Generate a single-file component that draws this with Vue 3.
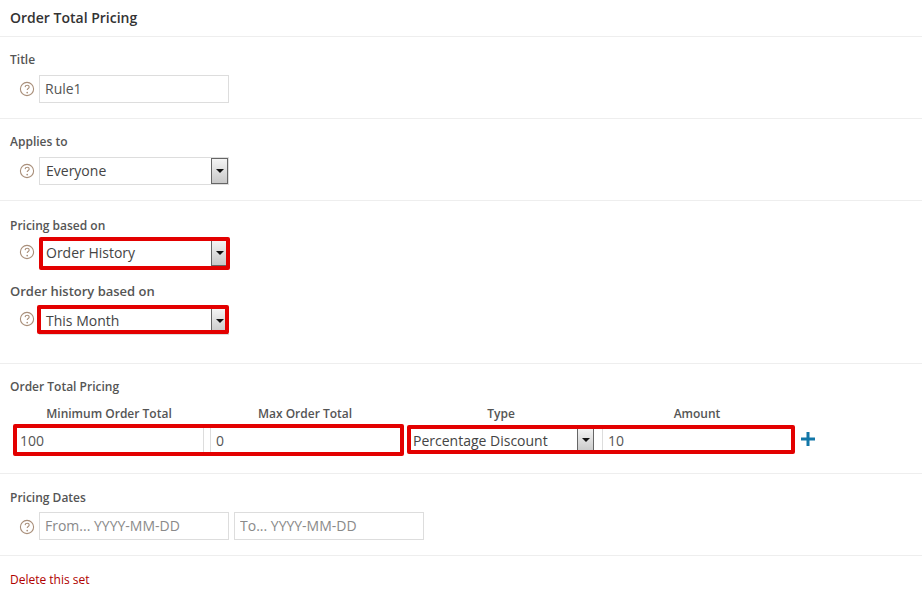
<script setup>
const help = 'M7.1 7.100c.1-1.200 1-1.900 2.100-1.900s2 .7 2 1.700c0 1.600-2 1.500-2 3.200';
</script>

<template>
  <div class="page">
    <h1 class="head">Order Total Pricing</h1>

    <section class="sec s-title">
      <div class="lab">Title</div>
      <div class="row">
        <svg class="help" viewBox="0 0 18 18"><circle cx="9" cy="9" r="6.600" /><path :d="help" /><circle class="dot" cx="9.200" cy="12.600" r=".85" /></svg>
        <input class="inp w190" value="Rule1" />
      </div>
    </section>

    <section class="sec s-applies">
      <div class="lab">Applies to</div>
      <div class="row">
        <svg class="help" viewBox="0 0 18 18"><circle cx="9" cy="9" r="6.600" /><path :d="help" /><circle class="dot" cx="9.200" cy="12.600" r=".85" /></svg>
        <div class="sel w190"><span>Everyone</span><i class="btn"><b></b></i></div>
      </div>
    </section>

    <section class="sec s-based">
      <div class="lab">Pricing based on</div>
      <div class="row">
        <svg class="help up1" viewBox="0 0 18 18"><circle cx="9" cy="9" r="6.600" /><path :d="help" /><circle class="dot" cx="9.200" cy="12.600" r=".85" /></svg>
        <div class="sel w190"><span>Order History</span><i class="btn"><b></b></i><em class="ring r1"></em></div>
      </div>
      <div class="lab lab2">Order history based on</div>
      <div class="row">
        <svg class="help up2" viewBox="0 0 18 18"><circle cx="9" cy="9" r="6.600" /><path :d="help" /><circle class="dot" cx="9.200" cy="12.600" r=".85" /></svg>
        <div class="sel w190"><span>This Month</span><i class="btn"><b></b></i><em class="ring r2"></em></div>
      </div>
    </section>

    <section class="sec s-table">
      <div class="lab">Order Total Pricing</div>
      <div class="cols">
        <div class="c c1">Minimum Order Total</div>
        <div class="c c2">Max Order Total</div>
        <div class="c c3">Type</div>
        <div class="c c4">Amount</div>
      </div>
      <div class="cells">
        <div class="group g1">
          <input class="inp cell c1" value="100" />
          <input class="inp cell c2" value="0" />
          <em class="ring r3"></em>
        </div>
        <div class="group g2">
          <div class="sel cell c3"><span>Percentage Discount</span><i class="btn"><b></b></i></div>
          <input class="inp cell c4" value="10" />
          <em class="ring r4"></em>
        </div>
        <svg class="plus" viewBox="0 0 14 14"><path d="M7 0v14M0 7h14" /></svg>
      </div>
    </section>

    <section class="sec s-dates">
      <div class="lab">Pricing Dates</div>
      <div class="row">
        <svg class="help down1" viewBox="0 0 18 18"><circle cx="9" cy="9" r="6.600" /><path :d="help" /><circle class="dot" cx="9.200" cy="12.600" r=".85" /></svg>
        <input class="inp w190" placeholder="From... YYYY-MM-DD" />
        <input class="inp w190 second" placeholder="To... YYYY-MM-DD" />
      </div>
    </section>

    <a class="del">Delete this set</a>
  </div>
</template>

<style scoped>
.page {
  width: 922px;
  height: 599px;
  overflow: hidden;
  background: #fff;
  font-family: "Open Sans", sans-serif;
  color: #444;
  box-sizing: border-box;
}
.head {
  margin: 0;
  height: 37px;
  box-sizing: border-box;
  padding: 8px 10px 0;
  font-size: 14px;
  line-height: 20px;
  font-weight: 600;
  color: #333;
  border-bottom: 1px solid #eee;
}
.sec {
  box-sizing: border-box;
  border-bottom: 1px solid #eee;
  padding: 15px 0 0 10px;
}
.s-title { height: 82px; }
.s-applies { height: 82px; }
.s-based { height: 163px; padding-top: 17px; }
.s-table { height: 110px; }
.s-dates { height: 82px; padding-top: 16px; }
.lab {
  font-size: 12px;
  line-height: 16px;
  font-weight: 600;
  color: #555;
  margin-bottom: 7px;
}
.s-based .lab { margin-bottom: 5px; }
.s-dates .lab { margin-bottom: 6px; }
.s-based .lab2 {
  font-size: 13px;
  line-height: 18px;
  margin: 15px 0 7px;
}
.row {
  display: flex;
  align-items: center;
  height: 28px;
}
.help {
  width: 18px;
  height: 18px;
  margin: 0 3px 0 8px;
  flex: none;
  fill: none;
  stroke: #a98f7a;
  stroke-width: 1.1;
}
.help .dot { fill: #a98f7a; stroke: none; }
.up1 { margin-bottom: 2px; }
.up2 { margin-bottom: 4px; }
.down1 { margin-top: 2px; }
.inp {
  box-sizing: border-box;
  height: 28px;
  border: 1px solid #ddd;
  padding: 0 5px 2px;
  font: 14px "Open Sans", sans-serif;
  color: #555;
  background: #fff;
  outline: none;
  border-radius: 0;
}
.inp::placeholder { color: #8a8a8a; opacity: 1; }
.w190 { width: 190px; flex: none; }
.second { margin-left: 5px; width: 190px; }
.sel {
  position: relative;
  box-sizing: border-box;
  height: 28px;
  border: 1px solid #ddd;
  display: flex;
  align-items: center;
  padding: 0 0 2px 6px;
  font-size: 14px;
  color: #444;
  background: #fff;
}
.btn {
  position: absolute;
  top: 0;
  right: 0;
  width: 17px;
  height: 26px;
  box-sizing: border-box;
  border: 1px solid #666;
  background: linear-gradient(#f4f4f4, #c8c8c8);
  display: flex;
  align-items: center;
  justify-content: center;
}
.btn b {
  width: 0;
  height: 0;
  border-left: 4px solid transparent;
  border-right: 4px solid transparent;
  border-top: 4px solid #111;
  margin-top: -1px;
}
.ring {
  position: absolute;
  border: 4px solid #e30000;
  border-radius: 2px;
  box-sizing: border-box;
  pointer-events: none;
}
.r1 { left: -1px; right: -2px; top: -3px; bottom: -4px; }
.r2 { left: -3px; right: -1px; top: -3px; bottom: 0; }
.cols {
  display: flex;
  margin-top: 10px;
  height: 18px;
  font-size: 12px;
  line-height: 18px;
  font-weight: 600;
  color: #555;
  text-align: center;
}
.cols .c1 { width: 198px; }
.cols .c2 { width: 194px; }
.cols .c3 { width: 188px; margin-left: 5px; }
.cols .c4 { width: 204px; }
.cells {
  display: flex;
  align-items: center;
  margin: 1px 0 0 3px;
  height: 32px;
}
.group {
  position: relative;
  display: flex;
  height: 28px;
  align-items: center;
}
.g1 { width: 391px; }
.g2 { width: 388px; margin-left: 3px; }
.cell { height: 26px; flex: none; padding-bottom: 0; }
.g1 .c1 { width: 191px; padding-left: 7px; border-width: 0 1px 0 0; }
.g1 .c2 { width: 194px; margin-left: 6px; padding-left: 5px; border-width: 0 0 0 1px; }
.g2 .c3 { width: 187px; padding-left: 6px; border: 0; }
.g2 .c4 { width: 191px; margin-left: 8px; padding-left: 5px; border-width: 0 0 0 1px; }
.r3 { inset: -2px 0 -2px 0; }
.r4 { inset: -1px 0 0 0; }
.plus {
  width: 14px;
  height: 14px;
  margin: -2px 0 0 6px;
  fill: none;
  stroke: #1277a8;
  stroke-width: 3;
}
.del {
  display: block;
  margin: 16px 0 0 10px;
  font-size: 12px;
  line-height: 16px;
  color: #b00000;
}
</style>
